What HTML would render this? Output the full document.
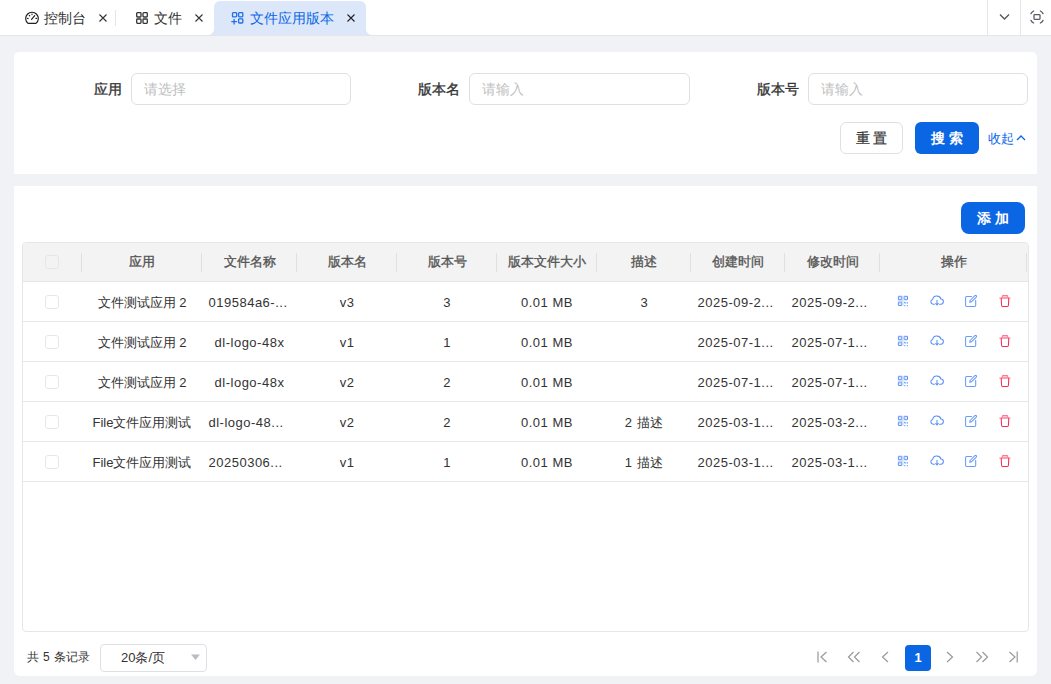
<!DOCTYPE html>
<html><head><meta charset="utf-8">
<style>
*{box-sizing:border-box;margin:0;padding:0}
html,body{width:1051px;height:684px;overflow:hidden}
body{background:#f0f2f5;font-family:"Liberation Sans",sans-serif;color:#333;position:relative;font-size:13px}
.a{position:absolute}
.tabbar{left:0;top:0;width:1051px;height:36px;background:#fff;border-bottom:1px solid #e3e5e9}
.tab{top:0;height:35px;font-size:14px;line-height:36px;color:#333;white-space:nowrap}
.sep{width:1px;background:#e5e6ea}
.close{width:8px;height:8px}
.active{left:214px;top:1px;width:152px;height:34px;background:#dde7fa;border-radius:6px 6px 0 0}
.active:before,.active:after{content:"";position:absolute;bottom:0;width:6px;height:6px;background:radial-gradient(circle at 0 0,transparent 6px,#dde7fa 6px)}
.active:before{left:-6px;background:radial-gradient(circle at 0 0,rgba(221,231,250,0) 5.5px,#dde7fa 6.5px)}
.active:after{right:-6px;background:radial-gradient(circle at 100% 0,rgba(221,231,250,0) 5.5px,#dde7fa 6.5px)}
.card{background:#fff}
.lbl{font-size:14px;font-weight:400;-webkit-text-stroke:0.35px #333;color:#333;text-align:right;line-height:20px}
.inp{width:220px;height:32px;border:1px solid #dfe0e4;border-radius:6px;background:#fff}
.ph{position:absolute;left:12px;top:0;line-height:30px;font-size:14px;color:#bfbfbf}
.btn{height:32px;border-radius:6px;font-size:14px;line-height:30px;text-align:center;white-space:nowrap}
.tbl{left:22px;top:242px;width:1007px;height:390px;border:1px solid #e6e6e6;border-radius:4px;overflow:hidden}
.th{top:0;height:38px;line-height:38px;font-size:13px;font-weight:400;-webkit-text-stroke:0.35px #555;color:#555;text-align:center;white-space:nowrap}
.hdr{left:0;top:0;width:1005px;height:39px;background:#f3f3f3;border-bottom:1px solid #e6e6e6}
.hsep{top:10px;width:1px;height:19px;background:#e0e0e0}
.row{left:0;width:1005px;height:40px;border-bottom:1px solid #e6e6e6}
.td{top:0;height:40px;line-height:41px;font-size:13px;color:#333;text-align:center;white-space:nowrap;overflow:hidden}
.cb{width:14px;height:14px;border:1px solid #e6e6e6;border-radius:3px;background:#fff}
.ico{top:11px}
</style></head><body>

<!-- tab bar -->
<div class="a tabbar"></div>
<!-- tab1 -->
<svg class="a" style="left:25px;top:11px" width="14" height="14" viewBox="0 0 14 14" fill="none" stroke="#222" stroke-width="1.2" stroke-linecap="round"><path d="M3 12.4A6.3 6.3 0 1 1 11 12.4Z" stroke-linejoin="round"/><path d="M6.6 8.3L9.7 4.6"/><path d="M7 3.2v0.4M4.3 4.5l0.4 0.3M2.6 7.4h0.5M11 7.4h0.5"/></svg>
<div class="a tab" style="left:44px">控制台</div>
<svg class="a" style="left:99px;top:14px" width="8" height="8" viewBox="0 0 8 8" stroke="#333" stroke-width="1.1"><path d="M0.5 0.5L7.5 7.5M7.5 0.5L0.5 7.5"/></svg>
<div class="a sep" style="left:115px;top:10px;height:16px"></div>
<!-- tab2 -->
<svg class="a" style="left:136px;top:12px" width="12" height="12" viewBox="0 0 12 12" fill="none" stroke="#333" stroke-width="1.3"><rect x="0.7" y="0.7" width="4.3" height="4.3" rx="0.8"/><rect x="7" y="0.7" width="4.3" height="4.3" rx="0.8"/><rect x="0.7" y="7" width="4.3" height="4.3" rx="0.8"/><rect x="7" y="7" width="4.3" height="4.3" rx="0.8"/></svg>
<div class="a tab" style="left:154px">文件</div>
<svg class="a" style="left:195px;top:14px" width="8" height="8" viewBox="0 0 8 8" stroke="#333" stroke-width="1.1"><path d="M0.5 0.5L7.5 7.5M7.5 0.5L0.5 7.5"/></svg>
<!-- active tab -->
<div class="a active"></div>
<svg class="a" style="left:231px;top:12px" width="13" height="13" viewBox="0 0 13 13" fill="none" stroke="#1f6fea" stroke-width="1.3"><rect x="1.5" y="0.7" width="4.2" height="4.2" rx="0.8"/><rect x="7.6" y="0.7" width="4.2" height="4.2" rx="0.8"/><rect x="7.6" y="6.8" width="4.2" height="4.2" rx="0.8"/><path d="M0.3 9.7h5.6M3.1 6.9v5.6"/></svg>
<div class="a tab" style="left:250px;color:#0a66e6">文件应用版本</div>
<svg class="a" style="left:347px;top:14px" width="8" height="8" viewBox="0 0 8 8" stroke="#222" stroke-width="1.1"><path d="M0.5 0.5L7.5 7.5M7.5 0.5L0.5 7.5"/></svg>
<!-- right tools -->
<div class="a sep" style="left:987px;top:0;height:35px"></div>
<div class="a sep" style="left:1020px;top:0;height:35px"></div>
<svg class="a" style="left:999px;top:13px" width="11" height="8" viewBox="0 0 11 8" fill="none" stroke="#555" stroke-width="1.3"><path d="M1 1.5L5.5 6L10 1.5"/></svg>
<svg class="a" style="left:1029px;top:9px" width="16" height="16" viewBox="0 0 16 16" fill="none" stroke="#5a5d66" stroke-width="1.3" stroke-linecap="round"><rect x="5" y="5.6" width="6" height="4.7" rx="0.7"/><path d="M1.96 4.65A6.9 6.9 0 0 1 4.65 1.96M11.35 1.96A6.9 6.9 0 0 1 14.04 4.65M14.04 11.35A6.9 6.9 0 0 1 11.35 14.04M4.65 14.04A6.9 6.9 0 0 1 1.96 11.35"/></svg>

<!-- search card -->
<div class="a card" style="left:14px;top:52px;width:1023px;height:122px;border-radius:5px 5px 0 0"></div>
<div class="a lbl" style="left:21.5px;top:79px;width:100px">应用</div>
<div class="a inp" style="left:131px;top:73px"><span class="ph">请选择</span></div>
<div class="a lbl" style="left:359.5px;top:79px;width:100px">版本名</div>
<div class="a inp" style="left:469px;top:73px;width:221px"><span class="ph">请输入</span></div>
<div class="a lbl" style="left:698.5px;top:79px;width:100px">版本号</div>
<div class="a inp" style="left:808px;top:73px"><span class="ph">请输入</span></div>

<div class="a btn" style="left:840px;top:122px;width:63px;border:1px solid #dfe0e4;color:#333;background:#fff;-webkit-text-stroke:0.2px #333">重 置</div>
<div class="a btn" style="left:915px;top:122px;width:64px;background:#0b66e4;color:#fff;font-weight:bold;line-height:32px">搜 索</div>
<div class="a" style="left:988px;top:128px;font-size:13px;line-height:21px;color:#0a67e6">收起</div>
<svg class="a" style="left:1016px;top:134px" width="10" height="8" viewBox="0 0 10 8" fill="none" stroke="#0a67e6" stroke-width="1.3"><path d="M1 6L5 2L9 6"/></svg>

<!-- table card -->
<div class="a card" style="left:14px;top:186px;width:1023px;height:490px;border-radius:0 0 6px 6px"></div>
<div class="a btn" style="left:961px;top:202px;width:64px;background:#0b66e4;color:#fff;font-weight:bold;line-height:32px;border-radius:8px">添 加</div>

<div class="a tbl">
  <div class="a hdr"></div>
  <div class="a cb" style="left:22px;top:12px;background:transparent"></div>
  <div class="a hsep" style="left:58px"></div>
  <div class="a th" style="left:59px;width:120px">应用</div>
  <div class="a hsep" style="left:178px"></div>
  <div class="a th" style="left:179px;width:95px">文件名称</div>
  <div class="a hsep" style="left:273px"></div>
  <div class="a th" style="left:274px;width:100px">版本名</div>
  <div class="a hsep" style="left:373px"></div>
  <div class="a th" style="left:374px;width:100px">版本号</div>
  <div class="a hsep" style="left:473px"></div>
  <div class="a th" style="left:474px;width:100px">版本文件大小</div>
  <div class="a hsep" style="left:573px"></div>
  <div class="a th" style="left:574px;width:94px">描述</div>
  <div class="a hsep" style="left:667px"></div>
  <div class="a th" style="left:668px;width:94px">创建时间</div>
  <div class="a hsep" style="left:761px"></div>
  <div class="a th" style="left:762px;width:95px">修改时间</div>
  <div class="a hsep" style="left:856px"></div>
  <div class="a th" style="left:857px;width:147px">操作</div>
  <div class="a hsep" style="left:1003px"></div>
  <div class="a row" style="top:39px"></div>
<div class="a cb" style="left:22px;top:52px"></div>
<div class="a td" style="left:59px;top:39px;width:120px;">文件测试应用 2</div>
<div class="a td" style="left:179px;top:39px;width:95px;letter-spacing:0.5px;text-align:left;padding-left:6.5px;">019584a6-...</div>
<div class="a td" style="left:274px;top:39px;width:100px;letter-spacing:0.5px;">v3</div>
<div class="a td" style="left:374px;top:39px;width:100px;letter-spacing:0.5px;">3</div>
<div class="a td" style="left:474px;top:39px;width:100px;letter-spacing:0.5px;">0.01 MB</div>
<div class="a td" style="left:574px;top:39px;width:94px;">3</div>
<div class="a td" style="left:668px;top:39px;width:94px;letter-spacing:0.5px;text-align:left;padding-left:6.5px;">2025-09-2...</div>
<div class="a td" style="left:762px;top:39px;width:95px;letter-spacing:0.5px;text-align:left;padding-left:6.5px;">2025-09-2...</div>
<svg class="a" style="left:871px;top:49px;opacity:0.85" width="18" height="18" viewBox="0 0 18 18" fill="none" stroke="#3a7af5" stroke-width="1"><rect x="4.4" y="4.3" width="3.4" height="3.4" rx="0.3"/><rect x="10.1" y="4.3" width="3.4" height="3.4" rx="0.3"/><rect x="4.4" y="10.1" width="3.4" height="3.4" rx="0.3"/><path d="M5.3 5.2h1.6v1.6H5.3zM11 5.2h1.6v1.6H11zM5.3 11h1.6v1.6H5.3z" fill="#c3d7fc" stroke="none"/><path d="M8.9 3.8v10.2M3.9 8.9h5" stroke="#b7cffb" stroke-width="1"/><path d="M10.2 10.3l1.4 1M13.3 10.2v1.4M10.4 13.6h0.9M12.8 13.6h0.9" stroke-width="1.2"/></svg>
<svg class="a" style="left:905px;top:49px;opacity:0.85" width="18" height="18" viewBox="0 0 18 18" fill="none" stroke="#3a7af5" stroke-width="1.05" stroke-linecap="round" stroke-linejoin="round"><path d="M6.4 12.2H5.3A2.4 2.4 0 0 1 4.6 7.5 4.3 4.3 0 0 1 12.9 7 2.6 2.6 0 0 1 12.6 12.2H11.6"/><path d="M9 8.4V12.9M7.6 11.5L9 12.9 10.4 11.5"/></svg>
<svg class="a" style="left:939px;top:49px;opacity:0.85" width="18" height="18" viewBox="0 0 18 18" fill="none" stroke="#4f8af7" stroke-width="1.05" stroke-linecap="round" stroke-linejoin="round"><path d="M9.6 4.4H4.7A1.1 1.1 0 0 0 3.6 5.5V13.4A1.1 1.1 0 0 0 4.7 14.5H12.6A1.1 1.1 0 0 0 13.7 13.4V8.4"/><path d="M7.7 10.3L8.1 8.5 12.9 3.7A0.95 0.95 0 0 1 14.25 5.05L9.45 9.85Z"/></svg>
<svg class="a" style="left:973px;top:49px" width="18" height="18" viewBox="0 0 18 18" fill="none" stroke="#fa2a55" stroke-width="1.05" stroke-linecap="round" stroke-linejoin="round"><path d="M6.3 6V4.2A0.8 0.8 0 0 1 7.1 3.4H10.9A0.8 0.8 0 0 1 11.7 4.2V6Z" fill="#ffc2cf" stroke="#fc7a95"/><path d="M3.6 6.1H14.2" stroke="#fc9ab0"/><path d="M5.2 6.1L5.6 13.5A1 1 0 0 0 6.6 14.4H11.4A1 1 0 0 0 12.4 13.5L12.8 6.1"/></svg>
<div class="a row" style="top:79px"></div>
<div class="a cb" style="left:22px;top:92px"></div>
<div class="a td" style="left:59px;top:79px;width:120px;">文件测试应用 2</div>
<div class="a td" style="left:179px;top:79px;width:95px;letter-spacing:0.5px;">dl-logo-48x</div>
<div class="a td" style="left:274px;top:79px;width:100px;letter-spacing:0.5px;">v1</div>
<div class="a td" style="left:374px;top:79px;width:100px;letter-spacing:0.5px;">1</div>
<div class="a td" style="left:474px;top:79px;width:100px;letter-spacing:0.5px;">0.01 MB</div>
<div class="a td" style="left:668px;top:79px;width:94px;letter-spacing:0.5px;text-align:left;padding-left:6.5px;">2025-07-1...</div>
<div class="a td" style="left:762px;top:79px;width:95px;letter-spacing:0.5px;text-align:left;padding-left:6.5px;">2025-07-1...</div>
<svg class="a" style="left:871px;top:89px;opacity:0.85" width="18" height="18" viewBox="0 0 18 18" fill="none" stroke="#3a7af5" stroke-width="1"><rect x="4.4" y="4.3" width="3.4" height="3.4" rx="0.3"/><rect x="10.1" y="4.3" width="3.4" height="3.4" rx="0.3"/><rect x="4.4" y="10.1" width="3.4" height="3.4" rx="0.3"/><path d="M5.3 5.2h1.6v1.6H5.3zM11 5.2h1.6v1.6H11zM5.3 11h1.6v1.6H5.3z" fill="#c3d7fc" stroke="none"/><path d="M8.9 3.8v10.2M3.9 8.9h5" stroke="#b7cffb" stroke-width="1"/><path d="M10.2 10.3l1.4 1M13.3 10.2v1.4M10.4 13.6h0.9M12.8 13.6h0.9" stroke-width="1.2"/></svg>
<svg class="a" style="left:905px;top:89px;opacity:0.85" width="18" height="18" viewBox="0 0 18 18" fill="none" stroke="#3a7af5" stroke-width="1.05" stroke-linecap="round" stroke-linejoin="round"><path d="M6.4 12.2H5.3A2.4 2.4 0 0 1 4.6 7.5 4.3 4.3 0 0 1 12.9 7 2.6 2.6 0 0 1 12.6 12.2H11.6"/><path d="M9 8.4V12.9M7.6 11.5L9 12.9 10.4 11.5"/></svg>
<svg class="a" style="left:939px;top:89px;opacity:0.85" width="18" height="18" viewBox="0 0 18 18" fill="none" stroke="#4f8af7" stroke-width="1.05" stroke-linecap="round" stroke-linejoin="round"><path d="M9.6 4.4H4.7A1.1 1.1 0 0 0 3.6 5.5V13.4A1.1 1.1 0 0 0 4.7 14.5H12.6A1.1 1.1 0 0 0 13.7 13.4V8.4"/><path d="M7.7 10.3L8.1 8.5 12.9 3.7A0.95 0.95 0 0 1 14.25 5.05L9.45 9.85Z"/></svg>
<svg class="a" style="left:973px;top:89px" width="18" height="18" viewBox="0 0 18 18" fill="none" stroke="#fa2a55" stroke-width="1.05" stroke-linecap="round" stroke-linejoin="round"><path d="M6.3 6V4.2A0.8 0.8 0 0 1 7.1 3.4H10.9A0.8 0.8 0 0 1 11.7 4.2V6Z" fill="#ffc2cf" stroke="#fc7a95"/><path d="M3.6 6.1H14.2" stroke="#fc9ab0"/><path d="M5.2 6.1L5.6 13.5A1 1 0 0 0 6.6 14.4H11.4A1 1 0 0 0 12.4 13.5L12.8 6.1"/></svg>
<div class="a row" style="top:119px"></div>
<div class="a cb" style="left:22px;top:132px"></div>
<div class="a td" style="left:59px;top:119px;width:120px;">文件测试应用 2</div>
<div class="a td" style="left:179px;top:119px;width:95px;letter-spacing:0.5px;">dl-logo-48x</div>
<div class="a td" style="left:274px;top:119px;width:100px;letter-spacing:0.5px;">v2</div>
<div class="a td" style="left:374px;top:119px;width:100px;letter-spacing:0.5px;">2</div>
<div class="a td" style="left:474px;top:119px;width:100px;letter-spacing:0.5px;">0.01 MB</div>
<div class="a td" style="left:668px;top:119px;width:94px;letter-spacing:0.5px;text-align:left;padding-left:6.5px;">2025-07-1...</div>
<div class="a td" style="left:762px;top:119px;width:95px;letter-spacing:0.5px;text-align:left;padding-left:6.5px;">2025-07-1...</div>
<svg class="a" style="left:871px;top:129px;opacity:0.85" width="18" height="18" viewBox="0 0 18 18" fill="none" stroke="#3a7af5" stroke-width="1"><rect x="4.4" y="4.3" width="3.4" height="3.4" rx="0.3"/><rect x="10.1" y="4.3" width="3.4" height="3.4" rx="0.3"/><rect x="4.4" y="10.1" width="3.4" height="3.4" rx="0.3"/><path d="M5.3 5.2h1.6v1.6H5.3zM11 5.2h1.6v1.6H11zM5.3 11h1.6v1.6H5.3z" fill="#c3d7fc" stroke="none"/><path d="M8.9 3.8v10.2M3.9 8.9h5" stroke="#b7cffb" stroke-width="1"/><path d="M10.2 10.3l1.4 1M13.3 10.2v1.4M10.4 13.6h0.9M12.8 13.6h0.9" stroke-width="1.2"/></svg>
<svg class="a" style="left:905px;top:129px;opacity:0.85" width="18" height="18" viewBox="0 0 18 18" fill="none" stroke="#3a7af5" stroke-width="1.05" stroke-linecap="round" stroke-linejoin="round"><path d="M6.4 12.2H5.3A2.4 2.4 0 0 1 4.6 7.5 4.3 4.3 0 0 1 12.9 7 2.6 2.6 0 0 1 12.6 12.2H11.6"/><path d="M9 8.4V12.9M7.6 11.5L9 12.9 10.4 11.5"/></svg>
<svg class="a" style="left:939px;top:129px;opacity:0.85" width="18" height="18" viewBox="0 0 18 18" fill="none" stroke="#4f8af7" stroke-width="1.05" stroke-linecap="round" stroke-linejoin="round"><path d="M9.6 4.4H4.7A1.1 1.1 0 0 0 3.6 5.5V13.4A1.1 1.1 0 0 0 4.7 14.5H12.6A1.1 1.1 0 0 0 13.7 13.4V8.4"/><path d="M7.7 10.3L8.1 8.5 12.9 3.7A0.95 0.95 0 0 1 14.25 5.05L9.45 9.85Z"/></svg>
<svg class="a" style="left:973px;top:129px" width="18" height="18" viewBox="0 0 18 18" fill="none" stroke="#fa2a55" stroke-width="1.05" stroke-linecap="round" stroke-linejoin="round"><path d="M6.3 6V4.2A0.8 0.8 0 0 1 7.1 3.4H10.9A0.8 0.8 0 0 1 11.7 4.2V6Z" fill="#ffc2cf" stroke="#fc7a95"/><path d="M3.6 6.1H14.2" stroke="#fc9ab0"/><path d="M5.2 6.1L5.6 13.5A1 1 0 0 0 6.6 14.4H11.4A1 1 0 0 0 12.4 13.5L12.8 6.1"/></svg>
<div class="a row" style="top:159px"></div>
<div class="a cb" style="left:22px;top:172px"></div>
<div class="a td" style="left:59px;top:159px;width:120px;">File文件应用测试</div>
<div class="a td" style="left:179px;top:159px;width:95px;letter-spacing:0.5px;text-align:left;padding-left:6.5px;">dl-logo-48...</div>
<div class="a td" style="left:274px;top:159px;width:100px;letter-spacing:0.5px;">v2</div>
<div class="a td" style="left:374px;top:159px;width:100px;letter-spacing:0.5px;">2</div>
<div class="a td" style="left:474px;top:159px;width:100px;letter-spacing:0.5px;">0.01 MB</div>
<div class="a td" style="left:574px;top:159px;width:94px;">2<span style="margin-left:1.5px"> </span>描述</div>
<div class="a td" style="left:668px;top:159px;width:94px;letter-spacing:0.5px;text-align:left;padding-left:6.5px;">2025-03-1...</div>
<div class="a td" style="left:762px;top:159px;width:95px;letter-spacing:0.5px;text-align:left;padding-left:6.5px;">2025-03-2...</div>
<svg class="a" style="left:871px;top:169px;opacity:0.85" width="18" height="18" viewBox="0 0 18 18" fill="none" stroke="#3a7af5" stroke-width="1"><rect x="4.4" y="4.3" width="3.4" height="3.4" rx="0.3"/><rect x="10.1" y="4.3" width="3.4" height="3.4" rx="0.3"/><rect x="4.4" y="10.1" width="3.4" height="3.4" rx="0.3"/><path d="M5.3 5.2h1.6v1.6H5.3zM11 5.2h1.6v1.6H11zM5.3 11h1.6v1.6H5.3z" fill="#c3d7fc" stroke="none"/><path d="M8.9 3.8v10.2M3.9 8.9h5" stroke="#b7cffb" stroke-width="1"/><path d="M10.2 10.3l1.4 1M13.3 10.2v1.4M10.4 13.6h0.9M12.8 13.6h0.9" stroke-width="1.2"/></svg>
<svg class="a" style="left:905px;top:169px;opacity:0.85" width="18" height="18" viewBox="0 0 18 18" fill="none" stroke="#3a7af5" stroke-width="1.05" stroke-linecap="round" stroke-linejoin="round"><path d="M6.4 12.2H5.3A2.4 2.4 0 0 1 4.6 7.5 4.3 4.3 0 0 1 12.9 7 2.6 2.6 0 0 1 12.6 12.2H11.6"/><path d="M9 8.4V12.9M7.6 11.5L9 12.9 10.4 11.5"/></svg>
<svg class="a" style="left:939px;top:169px;opacity:0.85" width="18" height="18" viewBox="0 0 18 18" fill="none" stroke="#4f8af7" stroke-width="1.05" stroke-linecap="round" stroke-linejoin="round"><path d="M9.6 4.4H4.7A1.1 1.1 0 0 0 3.6 5.5V13.4A1.1 1.1 0 0 0 4.7 14.5H12.6A1.1 1.1 0 0 0 13.7 13.4V8.4"/><path d="M7.7 10.3L8.1 8.5 12.9 3.7A0.95 0.95 0 0 1 14.25 5.05L9.45 9.85Z"/></svg>
<svg class="a" style="left:973px;top:169px" width="18" height="18" viewBox="0 0 18 18" fill="none" stroke="#fa2a55" stroke-width="1.05" stroke-linecap="round" stroke-linejoin="round"><path d="M6.3 6V4.2A0.8 0.8 0 0 1 7.1 3.4H10.9A0.8 0.8 0 0 1 11.7 4.2V6Z" fill="#ffc2cf" stroke="#fc7a95"/><path d="M3.6 6.1H14.2" stroke="#fc9ab0"/><path d="M5.2 6.1L5.6 13.5A1 1 0 0 0 6.6 14.4H11.4A1 1 0 0 0 12.4 13.5L12.8 6.1"/></svg>
<div class="a row" style="top:199px"></div>
<div class="a cb" style="left:22px;top:212px"></div>
<div class="a td" style="left:59px;top:199px;width:120px;">File文件应用测试</div>
<div class="a td" style="left:179px;top:199px;width:95px;letter-spacing:0.5px;text-align:left;padding-left:6.5px;">20250306...</div>
<div class="a td" style="left:274px;top:199px;width:100px;letter-spacing:0.5px;">v1</div>
<div class="a td" style="left:374px;top:199px;width:100px;letter-spacing:0.5px;">1</div>
<div class="a td" style="left:474px;top:199px;width:100px;letter-spacing:0.5px;">0.01 MB</div>
<div class="a td" style="left:574px;top:199px;width:94px;">1<span style="margin-left:1.5px"> </span>描述</div>
<div class="a td" style="left:668px;top:199px;width:94px;letter-spacing:0.5px;text-align:left;padding-left:6.5px;">2025-03-1...</div>
<div class="a td" style="left:762px;top:199px;width:95px;letter-spacing:0.5px;text-align:left;padding-left:6.5px;">2025-03-1...</div>
<svg class="a" style="left:871px;top:209px;opacity:0.85" width="18" height="18" viewBox="0 0 18 18" fill="none" stroke="#3a7af5" stroke-width="1"><rect x="4.4" y="4.3" width="3.4" height="3.4" rx="0.3"/><rect x="10.1" y="4.3" width="3.4" height="3.4" rx="0.3"/><rect x="4.4" y="10.1" width="3.4" height="3.4" rx="0.3"/><path d="M5.3 5.2h1.6v1.6H5.3zM11 5.2h1.6v1.6H11zM5.3 11h1.6v1.6H5.3z" fill="#c3d7fc" stroke="none"/><path d="M8.9 3.8v10.2M3.9 8.9h5" stroke="#b7cffb" stroke-width="1"/><path d="M10.2 10.3l1.4 1M13.3 10.2v1.4M10.4 13.6h0.9M12.8 13.6h0.9" stroke-width="1.2"/></svg>
<svg class="a" style="left:905px;top:209px;opacity:0.85" width="18" height="18" viewBox="0 0 18 18" fill="none" stroke="#3a7af5" stroke-width="1.05" stroke-linecap="round" stroke-linejoin="round"><path d="M6.4 12.2H5.3A2.4 2.4 0 0 1 4.6 7.5 4.3 4.3 0 0 1 12.9 7 2.6 2.6 0 0 1 12.6 12.2H11.6"/><path d="M9 8.4V12.9M7.6 11.5L9 12.9 10.4 11.5"/></svg>
<svg class="a" style="left:939px;top:209px;opacity:0.85" width="18" height="18" viewBox="0 0 18 18" fill="none" stroke="#4f8af7" stroke-width="1.05" stroke-linecap="round" stroke-linejoin="round"><path d="M9.6 4.4H4.7A1.1 1.1 0 0 0 3.6 5.5V13.4A1.1 1.1 0 0 0 4.7 14.5H12.6A1.1 1.1 0 0 0 13.7 13.4V8.4"/><path d="M7.7 10.3L8.1 8.5 12.9 3.7A0.95 0.95 0 0 1 14.25 5.05L9.45 9.85Z"/></svg>
<svg class="a" style="left:973px;top:209px" width="18" height="18" viewBox="0 0 18 18" fill="none" stroke="#fa2a55" stroke-width="1.05" stroke-linecap="round" stroke-linejoin="round"><path d="M6.3 6V4.2A0.8 0.8 0 0 1 7.1 3.4H10.9A0.8 0.8 0 0 1 11.7 4.2V6Z" fill="#ffc2cf" stroke="#fc7a95"/><path d="M3.6 6.1H14.2" stroke="#fc9ab0"/><path d="M5.2 6.1L5.6 13.5A1 1 0 0 0 6.6 14.4H11.4A1 1 0 0 0 12.4 13.5L12.8 6.1"/></svg>

</div>

<!-- footer -->
<div class="a" style="left:27px;top:648px;font-size:12px;line-height:18px;color:#333;letter-spacing:0.3px">共 5 条记录</div>
<div class="a" style="left:100px;top:644px;width:107px;height:28px;border:1px solid #dfe0e4;border-radius:4px;background:#fff">
  <span class="a" style="left:20px;top:0;line-height:26px;font-size:13px;color:#333">20条/页</span>
  <svg class="a" style="left:90px;top:9px" width="9" height="7" viewBox="0 0 9 7"><path d="M0 0.5H9L4.5 6Z" fill="#b8bcc4"/></svg>
</div>
<svg class="a" style="left:817px;top:651px" width="11" height="12" viewBox="0 0 11 12" fill="none" stroke="#999" stroke-width="1.2"><path d="M1 0.5V11.5M9.5 1L4 6L9.5 11"/></svg>
<svg class="a" style="left:847px;top:651px" width="14" height="12" viewBox="0 0 14 12" fill="none" stroke="#999" stroke-width="1.2"><path d="M6.5 1L1.5 6L6.5 11M12.5 1L7.5 6L12.5 11"/></svg>
<svg class="a" style="left:881px;top:651px" width="8" height="12" viewBox="0 0 8 12" fill="none" stroke="#999" stroke-width="1.2"><path d="M7 1L1.5 6L7 11"/></svg>
<div class="a" style="left:905px;top:645px;width:26px;height:26px;background:#0b66e4;border-radius:4px;color:#fff;font-weight:bold;font-size:13px;line-height:26px;text-align:center">1</div>
<svg class="a" style="left:946px;top:651px" width="8" height="12" viewBox="0 0 8 12" fill="none" stroke="#999" stroke-width="1.2"><path d="M1 1L6.5 6L1 11"/></svg>
<svg class="a" style="left:975px;top:651px" width="14" height="12" viewBox="0 0 14 12" fill="none" stroke="#999" stroke-width="1.2"><path d="M1.5 1L6.5 6L1.5 11M7.5 1L12.5 6L7.5 11"/></svg>
<svg class="a" style="left:1008px;top:651px" width="11" height="12" viewBox="0 0 11 12" fill="none" stroke="#999" stroke-width="1.2"><path d="M9.2 0.5V11.5M1.5 1L7 6L1.5 11"/></svg>
</body></html>
